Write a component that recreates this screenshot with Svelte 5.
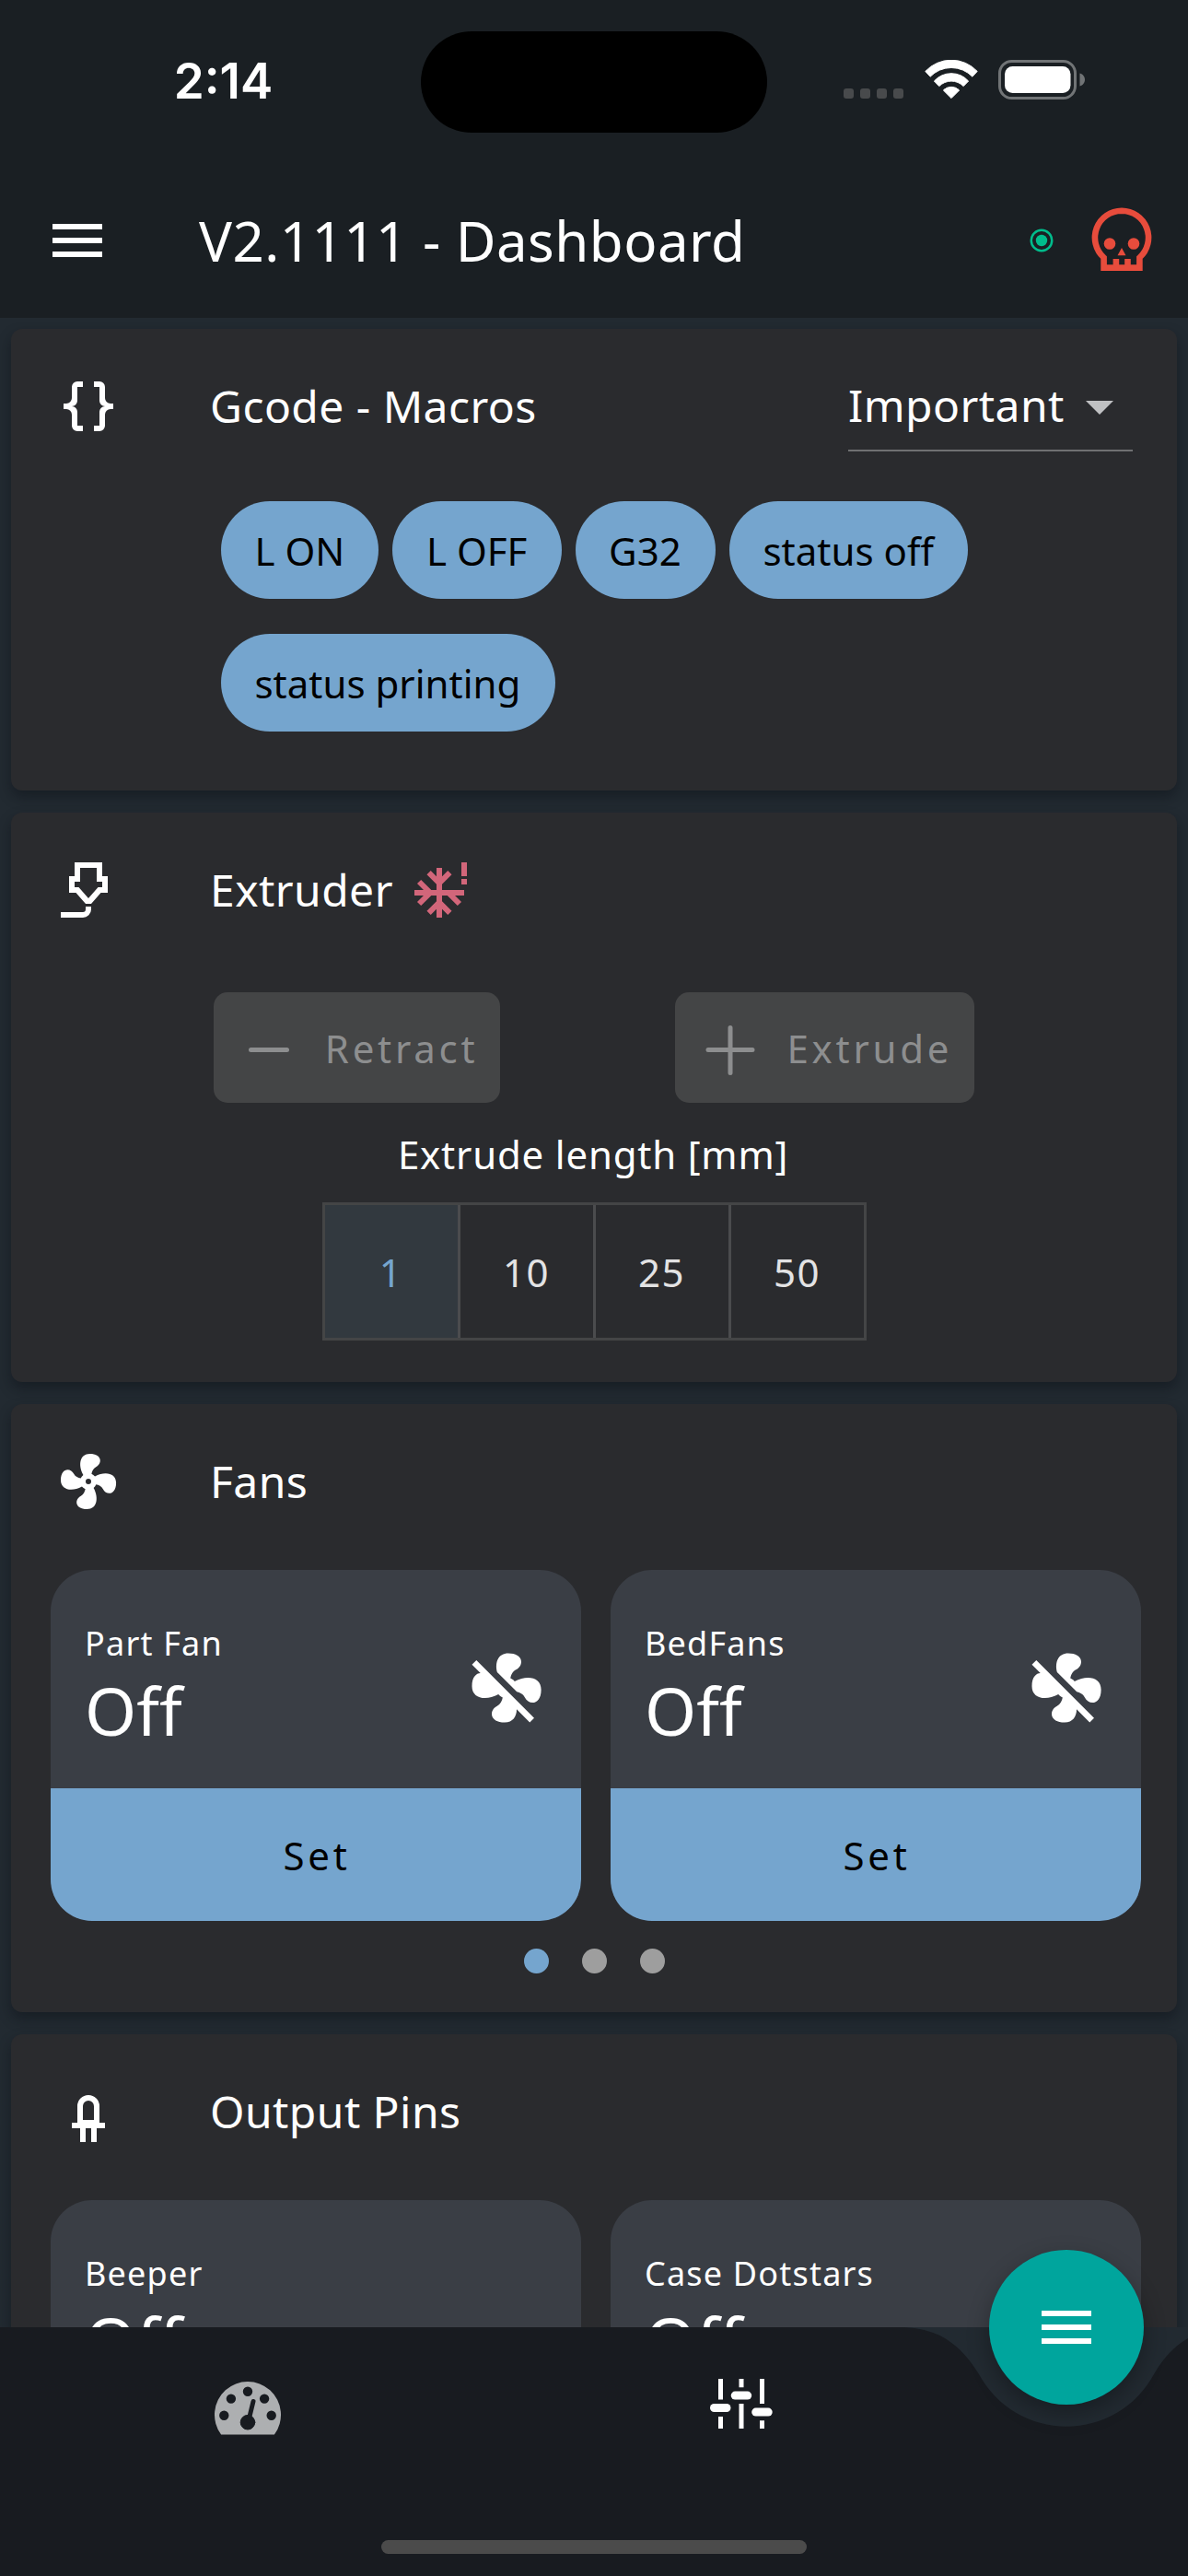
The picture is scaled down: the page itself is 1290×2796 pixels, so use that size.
<script>
  const macros = ['L ON', 'L OFF', 'G32', 'status off', 'status printing'];
  const lengths = ['1', '10', '25', '50'];
  const fans = ['Part Fan', 'BedFans'];
  const pins = ['Beeper', 'Case Dotstars'];

  const icons = {
    menu: 'M3,6H21V8H3V6M3,11H21V13H3V11M3,16H21V18H3V16Z',
    braces:
      'M8,3A2,2 0 0,0 6,5V9A2,2 0 0,1 4,11H3V13H4A2,2 0 0,1 6,15V19A2,2 0 0,0 8,21H10V19H8V14A2,2 0 0,0 6,12A2,2 0 0,0 8,10V5H10V3M16,3A2,2 0 0,1 18,5V9A2,2 0 0,0 20,11H21V13H20A2,2 0 0,0 18,15V19A2,2 0 0,1 16,21H14V19H16V14A2,2 0 0,1 18,12A2,2 0 0,1 16,10V5H14V3H16Z',
    nozzle:
      'M7,2H17V7H19V13H16.5L13,17H11L7.5,13H5V7H7V2M9,4V9H7V11H8.5L12,15L15.5,11H17V9H15V4H9M2,22V20H10A1,1 0 0,0 11,19V18H13V19A3,3 0 0,1 10,22Z',
    fan:
      'M12,11A1,1 0 0,0 11,12A1,1 0 0,0 12,13A1,1 0 0,0 13,12A1,1 0 0,0 12,11M12.5,2C17,2 17.11,5.57 14.75,6.75C13.76,7.24 13.32,8.29 13.13,9.22C13.61,9.42 14.03,9.73 14.35,10.13C18.05,8.13 22.03,8.92 22.03,12.5C22.03,17 18.46,17.1 17.28,14.73C16.78,13.74 15.72,13.3 14.79,13.11C14.59,13.59 14.28,14 13.88,14.34C15.87,18.03 15.08,22 11.5,22C7,22 6.91,18.42 9.27,17.24C10.25,16.75 10.69,15.71 10.89,14.79C10.4,14.59 9.97,14.27 9.65,13.87C5.96,15.85 2,15.07 2,11.5C2,7 5.56,6.89 6.74,9.26C7.24,10.25 8.29,10.68 9.22,10.87C9.41,10.39 9.73,9.97 10.14,9.65C8.15,5.96 8.94,2 12.5,2Z',
    fanOff:
      'M12.5,2C9.64,2 8.57,4.55 9.29,7.47L15,13.16C15.87,13.37 16.81,13.81 17.28,14.73C18.46,17.1 22.03,17 22.03,12.5C22.03,8.92 18.05,8.13 14.35,10.13C14.03,9.73 13.61,9.42 13.13,9.22C13.32,8.29 13.76,7.24 14.75,6.75C17.11,5.57 17,2 12.5,2M3.28,4L2,5.27L4.47,7.73C3.22,7.74 2,8.87 2,11.5C2,15.07 5.96,15.85 9.65,13.87C9.97,14.27 10.4,14.59 10.89,14.79C10.69,15.71 10.25,16.75 9.27,17.24C6.91,18.42 7,22 11.5,22C13.8,22 14.94,20.36 14.94,18.21L18.73,22L20,20.72L3.28,4Z',
    led:
      'M12,6A4,4 0 0,0 8,10V16H6V18H9V23H11V18H13V23H15V18H18V16H16V10A4,4 0 0,0 12,6M12,8A2,2 0 0,1 14,10V15H10V10A2,2 0 0,1 12,8Z',
    dropdown: 'M7,10L12,15L17,10H7Z'
  };
</script>

{#snippet icon(name)}
  <svg class="icon" viewBox="0 0 24 24"><path fill-rule="evenodd" d={icons[name]} /></svg>
{/snippet}

{#snippet tile(label, glyph)}
  <div class="tile">
    <div class="tile-body">
      <div class="tile-text">
        <span class="tile-label">{label}</span>
        <span class="tile-value">Off</span>
      </div>
      {#if glyph}
        <svg class="tile-icon" viewBox="0 0 24 24"><path d={icons[glyph]} /></svg>
      {/if}
    </div>
    {#if glyph}
      <button class="tile-action">Set</button>
    {/if}
  </div>
{/snippet}

<div class="screen">
  <div class="status">
    <div class="time">2:14</div>
    <div class="island"></div>
    <div class="indicators">
      <div class="cell"><i></i><i></i><i></i><i></i></div>
      <svg class="wifi" viewBox="0 0 58 42">
        <path d="M.8 12.4A38.7 38.7 0 0 1 57.2 12.4L51.9 18.2A31.9 31.9 0 0 0 6.1 18.2Z" />
        <path d="M10.4 23A25 25 0 0 1 47.6 23L42.2 28.6A18.5 18.5 0 0 0 15.8 28.6Z" />
        <path d="M20.4 33A12 12 0 0 1 37.6 33L29 41.6Z" />
      </svg>
      <svg class="battery" viewBox="0 0 95 43">
        <rect class="shell" x="1.5" y="1.5" width="82" height="40" rx="13" />
        <rect x="7" y="7" width="71.500" height="29" rx="8.500" />
        <path class="cap" d="M88.500 14.500C92 15.500 94 18.500 94 21.500S92 27.500 88.500 28.500Z" />
      </svg>
    </div>
  </div>

  <header class="appbar">
    {@render icon('menu')}
    <h1>V2.1111 - Dashboard</h1>
    <svg class="online" viewBox="0 0 30 30">
      <circle class="ring" cx="15" cy="15" r="11.250" />
      <circle cx="15" cy="15" r="6.200" />
    </svg>
    <svg class="skull" viewBox="0 0 66 70">
      <path
        class="line"
        d="M33 3.700A29.200 29.200 0 0 0 13.600 54.600V65.600H52.400V54.600A29.200 29.200 0 0 0 33 3.700Z"
      />
      <circle cx="20" cy="39.500" r="6.300" />
      <circle cx="46" cy="39.500" r="6.300" />
      <path d="M33 44L37.500 52.300H28.500ZM23.600 56H30.200V64H23.600ZM36.200 56H42.800V64H36.200Z" />
    </svg>
  </header>

  <main>
    <section class="card macros">
      <div class="head">
        {@render icon('braces')}
        <h2>Gcode - Macros</h2>
        <div class="select">
          <span>Important</span>
          {@render icon('dropdown')}
        </div>
      </div>
      <div class="chips">
        {#each macros as m}<button class="chip">{m}</button>{/each}
      </div>
    </section>

    <section class="card extruder">
      <div class="head">
        {@render icon('nozzle')}
        <h2>Extruder</h2>
        <svg class="icon cold" viewBox="0 0 24 24">
          <path d="M2 13H20M11 4V22M7.200 5.700L11 9.500L14.800 5.700M7.200 20.300L11 16.500L14.800 20.300M3.700 9L7.700 13L3.700 17M18.300 17L14.300 13M20 2V7M20 8V10" />
        </svg>
      </div>
      <div class="actions">
        <button class="disabled">
          <svg class="sign" viewBox="0 0 72 72"><path d="M16.500 38.500H55.500" /></svg>Retract
        </button>
        <button class="disabled">
          <svg class="sign" viewBox="0 0 72 72"><path d="M12 38.500H60M36 14.500V63.500" /></svg>Extrude
        </button>
      </div>
      <p>Extrude length [mm]</p>
      <div class="toggle">
        {#each lengths as l, i}<div class="opt" class:selected={i === 0}>{l}</div>{/each}
      </div>
    </section>

    <section class="card fans">
      <div class="head">
        {@render icon('fan')}
        <h2>Fans</h2>
      </div>
      <div class="tiles">
        {#each fans as f}{@render tile(f, 'fanOff')}{/each}
      </div>
      <div class="pager"><i class="active"></i><i></i><i></i></div>
    </section>

    <section class="card pins">
      <div class="head">
        {@render icon('led')}
        <h2>Output Pins</h2>
      </div>
      <div class="tiles">
        {#each pins as p}{@render tile(p, null)}{/each}
      </div>
    </section>
  </main>

  <nav>
    <svg class="shape" viewBox="0 0 1290 270">
      <path d="M0 0H976C1014 0 1040 14 1063 51A108 108 0 0 0 1253 51C1264 32 1275 21 1290 12V270H0Z" />
    </svg>
    <div class="tabs">
      <svg class="gauge" viewBox="0 0 72 58">
        <path
          fill-rule="evenodd"
          d="M7.100 57.500A36 36 0 1 1 64.900 57.500ZM30.800 10.700a5.200 5.200 0 1 0 10.400 0a5.200 5.200 0 1 0 -10.400 0M12.700 18.600a5.200 5.200 0 1 0 10.400 0a5.200 5.200 0 1 0 -10.400 0M48.900 18.600a5.200 5.200 0 1 0 10.400 0a5.200 5.200 0 1 0 -10.400 0M5.100 36.700a5.200 5.200 0 1 0 10.400 0a5.200 5.200 0 1 0 -10.400 0M56.500 36.700a5.200 5.200 0 1 0 10.400 0a5.200 5.200 0 1 0 -10.400 0"
        />
        <g class="needle"><circle cx="36" cy="44.200" r="7.800" /><path d="M37 42L42 21.500" /></g>
      </svg>
      <svg class="sliders" viewBox="0 0 68 54">
        <path d="M9 0H14V22.500H9ZM9 41H14V54H9ZM31.500 0H36.500V9.300H31.500ZM31.500 27H36.500V54H31.500ZM54 0H59V27H54ZM54 45.300H59V54H54Z" />
        <rect x="0" y="27" width="22.500" height="9" rx="4.500" />
        <rect x="22.700" y="13.600" width="22.500" height="9" rx="4.500" />
        <rect x="45.200" y="31.600" width="22.500" height="9" rx="4.500" />
      </svg>
    </div>
    <div class="home"></div>
    <button class="fab" aria-label="menu">{@render icon('menu')}</button>
  </nav>
</div>

<style>
  :global(body) {
    background: #222a31;
  }

  .screen {
    width: 1290px;
    height: 2796px;
    display: flex;
    flex-direction: column;
    overflow: hidden;
    background: #222a31;
    color: #fff;
    font-family: 'Noto Sans', sans-serif;
  }

  svg {
    display: block;
    flex: none;
    fill: currentColor;
  }

  button {
    border: 0;
    margin: 0;
    padding: 0;
    font: inherit;
    color: inherit;
  }

  h1,
  h2,
  p {
    margin: 0;
    font-weight: 400;
  }

  .icon {
    width: 72px;
    height: 72px;
  }

  /* status bar */
  .status {
    height: 177px;
    flex: none;
    display: grid;
    grid-template-columns: 457px 376px 1fr;
    align-items: center;
    background: #1a1f23;
  }

  .time {
    padding: 0 0 1px 28px;
    text-align: center;
    font: 600 53px/60px Inter, sans-serif;
  }

  .island {
    height: 110px;
    margin-top: 1px;
    border-radius: 55px;
    background: #000;
  }

  .indicators {
    display: flex;
    height: 43px;
    padding-left: 83px;
    margin-bottom: 4px;
  }

  .cell {
    display: flex;
    gap: 7px;
    align-items: flex-end;
    padding-bottom: 1px;
    width: 88px;
  }

  .cell i {
    width: 11px;
    height: 11px;
    border-radius: 3px;
    background: #484a4c;
  }

  .wifi {
    width: 58px;
    height: 42px;
    stroke: #fff;
    stroke-linejoin: round;
  }

  .battery {
    width: 95px;
    height: 43px;
    margin-left: 22px;
  }

  .shell {
    fill: none;
    stroke: #717476;
    stroke-width: 3px;
  }

  .cap {
    fill: #717476;
  }

  /* app bar */
  .appbar {
    height: 168px;
    flex: none;
    display: flex;
    align-items: center;
    box-sizing: border-box;
    padding: 0 39px 0 48px;
    background: #1a1f23;
  }

  h1 {
    flex: 1;
    margin-left: 96px;
    font-size: 60px;
    line-height: 84px;
    letter-spacing: 0.45px;
  }

  .online {
    width: 30px;
    height: 30px;
    color: #00bc8c;
  }

  .ring {
    fill: none;
    stroke: currentColor;
    stroke-width: 2.500px;
  }

  .skull {
    width: 66px;
    height: 70px;
    margin: 0 0 3px 39px;
    color: #e74c3c;
  }

  .line {
    fill: none;
    stroke: currentColor;
    stroke-width: 6.600px;
  }

  /* content */
  main {
    flex: 1;
    min-height: 0;
    overflow: hidden;
    display: flex;
    flex-direction: column;
    gap: 24px;
    padding: 12px 12px 0;
  }

  .card {
    flex: none;
    border-radius: 12px;
    background: #2a2b2e;
    box-shadow: 0 7px 14px rgba(10, 16, 22, 0.45);
  }

  .macros {
    height: 501px;
  }

  .extruder {
    height: 618px;
  }

  .fans {
    height: 660px;
  }

  .pins {
    height: 600px;
  }

  .head {
    height: 168px;
    display: flex;
    align-items: center;
    padding: 0 48px;
  }

  h2 {
    margin-left: 96px;
    font-size: 48px;
    line-height: 66px;
    letter-spacing: 0.45px;
  }

  .select {
    width: 309px;
    height: 98px;
    margin: 0 0 0 auto;
    display: flex;
    align-items: center;
    justify-content: space-between;
    box-sizing: border-box;
    border-bottom: 2px solid #6f7072;
    border-top: 2px solid transparent;
    font-size: 48px;
    line-height: 66px;
    letter-spacing: 0.45px;
  }

  .select span {
    margin-bottom: 2px;
  }

  .select .icon {
    color: #c0c1c3;
  }

  .chips {
    display: flex;
    flex-wrap: wrap;
    gap: 38px 15px;
    padding: 19px 150px 0 228px;
  }

  .chip {
    height: 106px;
    padding: 0 37.300px 0 36.500px;
    border-radius: 53px;
    background: #75a5ce;
    color: #000;
    font-size: 42px;
  }

  .cold {
    margin-left: 17px;
    fill: none;
    stroke: #d2667a;
    stroke-width: 2;
  }

  .actions {
    display: flex;
    justify-content: center;
    gap: 190px;
    padding-top: 27px;
  }

  .disabled {
    height: 120px;
    display: flex;
    align-items: center;
    gap: 25px;
    padding: 0 24px;
    border-radius: 15px;
    background: #444546;
    color: #8d8e8f;
    font-size: 42px;
    letter-spacing: 3.750px;
  }

  .sign {
    width: 72px;
    height: 72px;
    fill: none;
    stroke: #8d8e8f;
    stroke-width: 5px;
    stroke-linecap: round;
  }

  p {
    padding: 27px 2px 24px 0;
    text-align: center;
    font-size: 42px;
    line-height: 57px;
    letter-spacing: 0.800px;
  }

  .toggle {
    width: 591px;
    height: 150px;
    margin: 0 auto;
    display: flex;
    box-sizing: border-box;
    border: 3px solid #444546;
  }

  .opt {
    flex: 1;
    display: flex;
    align-items: center;
    justify-content: center;
    color: #e3e3e4;
    font-size: 42px;
    letter-spacing: 1.500px;
  }

  .opt + .opt {
    border-left: 3px solid #4b4c4e;
  }

  .selected {
    flex: 0 0 144px;
    background: #32393f;
    color: #75a5ce;
  }

  .tiles {
    display: grid;
    grid-template-columns: 576px 576px;
    gap: 32px;
    padding: 12px 0 0 43px;
  }

  .tile {
    border-radius: 45px;
    overflow: hidden;
    background: #3a3e45;
  }

  .tile-body {
    height: 237px;
    box-sizing: border-box;
    padding: 54px 36px 36px;
    display: flex;
    align-items: center;
    justify-content: space-between;
  }

  .tile-text {
    display: flex;
    flex-direction: column;
  }

  .tile-label {
    padding: 1px 0 0 1px;
    margin-bottom: -1px;
    font-size: 36px;
    line-height: 49px;
    letter-spacing: 1.200px;
  }

  .tile-value {
    padding-left: 1px;
    font-size: 72px;
    line-height: 98px;
  }

  .tile-icon {
    width: 90px;
    height: 90px;
  }

  .tile-action {
    display: block;
    width: 100%;
    height: 144px;
    padding-left: 2px;
    background: #75a5ce;
    color: #000;
    font-size: 42px;
    letter-spacing: 3.750px;
  }

  .pager {
    display: flex;
    justify-content: center;
    gap: 36px;
    padding-top: 30px;
  }

  .pager i {
    width: 27px;
    height: 27px;
    border-radius: 50%;
    background: #9e9e9e;
  }

  .pager .active {
    background: #75a5ce;
  }

  /* bottom navigation */
  nav {
    position: relative;
    flex: none;
    height: 270px;
    display: flex;
    flex-direction: column;
    justify-content: space-between;
    align-items: center;
  }

  .shape {
    position: absolute;
    inset: 0;
    width: 1290px;
    height: 270px;
    color: #181b20;
  }

  .tabs {
    position: relative;
    width: 100%;
    display: grid;
    grid-template-columns: 538px 533px;
    justify-items: center;
    padding-top: 56px;
  }

  .gauge {
    width: 72px;
    height: 58px;
    margin-top: 3px;
    color: #adafb1;
  }

  .needle {
    fill: #181b20;
    stroke: #181b20;
    stroke-linecap: round;
  }

  .needle path {
    stroke-width: 5px;
  }

  .sliders {
    width: 68px;
    height: 54px;
  }

  .home {
    position: relative;
    width: 462px;
    height: 15px;
    margin-bottom: 24px;
    border-radius: 8px;
    background: #4b4b4b;
  }

  .fab {
    position: absolute;
    left: 1074px;
    top: -84px;
    width: 168px;
    height: 168px;
    display: flex;
    align-items: center;
    justify-content: center;
    border-radius: 50%;
    background: #00a59d;
    box-shadow: 0 9px 24px rgba(0, 0, 0, 0.3);
  }
</style>
